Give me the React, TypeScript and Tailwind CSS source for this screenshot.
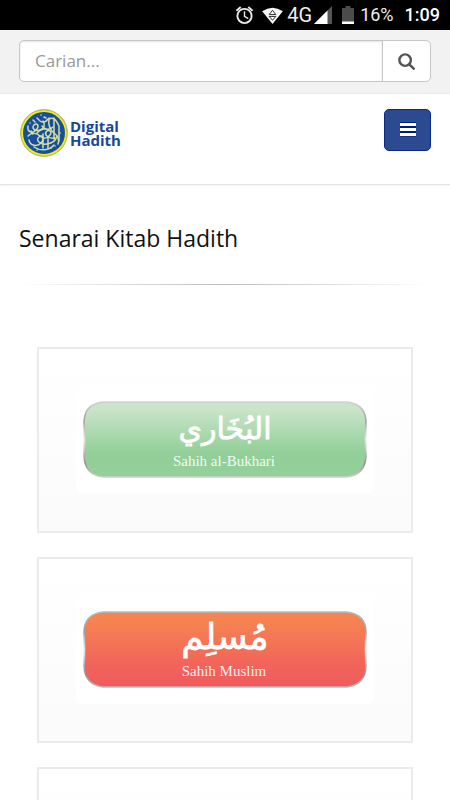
import { useId } from "react";

type Book = {
  arabic: string;
  arabicSize: number;
  title: string;
  from: string;
  middle: string;
  to: string;
  edge: string;
};

const books: Book[] = [
  {
    arabic: "البُخَاري",
    arabicSize: 30,
    title: "Sahih al-Bukhari",
    from: "#c9e4c9",
    middle: "#92cf98",
    to: "#94d09a",
    edge: "#d6cfd0",
  },
  {
    arabic: "مُسلِم",
    arabicSize: 36,
    title: "Sahih Muslim",
    from: "#f58452",
    middle: "#f2655a",
    to: "#f05a5f",
    edge: "#b9bcbb",
  },
];

function StatusBar() {
  return (
    <div className="flex h-[30px] shrink-0 items-center justify-end bg-black pr-[10px] font-['Roboto',sans-serif] text-lg leading-none text-[#eeeeee]">
      <svg aria-label="Alarm" className="mr-2 h-5 w-[19px]" fill="none" role="img" stroke="#e8e8e8" strokeWidth="2" viewBox="0 0 20 20">
        <circle cx="10" cy="11" r="7.5" />
        <path d="M10 6v5.5l4 2.3" strokeWidth="1.5" />
        <path d="M1.5 5.5 6 1.5M18.5 5.5 14 1.5" />
      </svg>
      <svg aria-label="Wi-Fi" className="mr-1 h-[17px] w-[21px]" role="img" viewBox="0 0 22 18">
        <path d="M0 4.5Q11-3 22 4.5L11 18Z" fill="#f5f5f5" />
        <path d="m11 3.5-3.5 4.5h7ZM7.5 10h7L11 14Z" fill="#fff" stroke="#222" strokeWidth="1" />
      </svg>
      <span className="text-xl leading-none">4G</span>
      <svg aria-label="Signal" className="ml-[2px] mr-[10px] h-[18px] w-[18px]" role="img" viewBox="0 0 18 18">
        <path d="M0 18 18 0v18Z" fill="#555" />
        <path d="M0 18 13.5 4.5V18Z" fill="#fff" />
      </svg>
      <svg aria-label="Battery" className="mr-[6px] h-[18px] w-3" role="img" viewBox="0 0 12 18">
        <path d="M3.5 0h5v2H12v16H0V2h3.5Z" fill="#4b4b4b" />
        <path d="M0 15.5h12V18H0Z" fill="#fff" />
      </svg>
      <span className="mr-[11px]">16%</span>
      <span className="font-medium text-white">1:09</span>
    </div>
  );
}

function SearchBar() {
  return (
    <div className="border-b border-[#ebebeb] bg-[#f2f2f2] px-[19px] pb-[11px] pt-[10px]">
      <form className="flex h-[42px] overflow-hidden rounded-[5px] border border-[#c6c6c6] bg-white" role="search">
        <input
          aria-label="Carian"
          className="min-w-0 flex-1 px-[15px] text-[17px] text-[#555] shadow-[inset_0_1px_2px_rgba(0,0,0,0.12)] outline-none placeholder:text-[#999]"
          placeholder="Carian..."
          type="text"
        />
        <button aria-label="Cari" className="flex w-12 items-center justify-center border-l border-[#c6c6c6]" type="submit">
          <svg className="h-[17px] w-[17px]" fill="none" stroke="#555" viewBox="0 0 16 16">
            <circle cx="6.7" cy="6.7" r="5.4" strokeWidth="2.3" />
            <path d="m10.6 10.6 4.2 4.2" strokeLinecap="round" strokeWidth="2.3" />
          </svg>
        </button>
      </form>
    </div>
  );
}

function Logo() {
  return (
    <a aria-label="Digital Hadith" className="flex items-center gap-[2px] pl-px" href="#">
      <svg className="h-12 w-12" fill="none" viewBox="0 0 48 48">
        <circle cx="24" cy="24" fill="#174f9e" r="23.4" stroke="#b9bc79" strokeWidth="1" />
        <circle cx="24" cy="24" r="22" stroke="#f2ec15" strokeWidth="2" />
        <g stroke="#d5dfa0" strokeLinecap="round" strokeWidth="1.5">
          <path d="M8 17c-1 6 4 8 8 4s1-8-2-5 1 7 6 5 5-6 3-9" />
          <path d="M29 9c-1 7 1 12 5 15s6 6 4 11" />
          <path d="M34 9v21M39 17v15M29 10c4-2 7 0 10 7" />
          <path d="M20 12c3 2 6 1 8-2M13 11l2 2M17 9l2 2M24 8l2 1" />
          <path d="M8 27c4-4 9-3 12 0s7 3 10-1-2-6-4-3 3 7 9 6" />
          <path d="M9 31c1 6 8 7 12 3s2-9-2-6 1 8 8 7 9-4 10-8" />
          <path d="M14 38c6 4 15 4 20-2M23 25v14M28 29v10M11 22l2 3" />
          <path d="M17 24c3-4 8-5 12-3M22 17c3 4 8 4 11 1" />
          <path d="M31 39h.1M35 37h.1M17 41h.1M10 14h.1M40 24h.1M21 6h.1" />
        </g>
      </svg>
      <span className="text-[15px] font-bold leading-[14px] text-[#19479b]">
        Digital
        <br />
        Hadith
      </span>
    </a>
  );
}

function BookBadge({ book }: { book: Book }) {
  const id = useId();
  const shape = "M20 1H264Q283 3 283 22Q282 38 283 55Q282 74 264 76H20Q2 74 1 55Q2 38 1 22Q1 3 20 1Z";

  return (
    <svg aria-label={book.title} className="block w-full" role="img" viewBox="0 0 284 77">
      <defs>
        <linearGradient id={`${id}-fill`} x1="0" x2="0" y1="0" y2="1">
          <stop offset="0.1" stopColor={book.from} />
          <stop offset="0.68" stopColor={book.middle} />
          <stop offset="1" stopColor={book.to} />
        </linearGradient>
        <linearGradient id={`${id}-edge`} x1="0" x2="0" y1="0" y2="1">
          <stop offset="0" stopColor={book.edge} />
          <stop offset="0.25" stopColor="#a39fa0" />
          <stop offset="0.5" stopColor="#e6e6e6" />
          <stop offset="0.82" stopColor="#969193" />
          <stop offset="1" stopColor={book.edge} />
        </linearGradient>
      </defs>
      <path d={shape} fill={`url(#${id}-fill)`} stroke={`url(#${id}-edge)`} strokeWidth="1.6" />
      <g fill="#fff" textAnchor="middle">
        <text
          fontFamily="'DejaVu Sans', sans-serif"
          fontSize={book.arabicSize}
          stroke="#fff"
          strokeWidth="0.8"
          x="142"
          y="38"
        >
          {book.arabic}
        </text>
        <text fillOpacity="0.9" fontFamily="'Liberation Serif', serif" fontSize="15" x="141" y="65">
          {book.title}
        </text>
      </g>
    </svg>
  );
}

function BookCard({ book }: { book?: Book }) {
  return (
    <li className="h-[186px] shrink-0 border-2 border-[#ebebeb] bg-linear-to-b from-white to-[#fbfbfb] px-[37px] py-[36px]">
      {book && (
        <a className="block rounded-md bg-white px-[7px] py-4" href="#">
          <BookBadge book={book} />
        </a>
      )}
    </li>
  );
}

export default function App() {
  return (
    <div className="flex h-screen flex-col overflow-hidden bg-white font-['Open_Sans',sans-serif]">
      <StatusBar />
      <SearchBar />
      <header className="flex h-[91px] shrink-0 items-start justify-between border-b border-[#e3e3e3] px-[19px] pt-[15px] shadow-[0_1px_2px_rgba(0,0,0,0.05)]">
        <Logo />
        <button
          aria-label="Menu"
          className="flex h-[42px] w-[47px] items-center justify-center rounded-[5px] border border-[#08298a] bg-[#2c4a8f]"
          type="button"
        >
          <svg className="h-4 w-4" viewBox="0 0 16 16">
            <path d="M0 2h16M0 7h16M0 12h16" stroke="#001a80" strokeWidth="5" />
            <path d="M0 2.5h16M0 7.5h16M0 12.5h16" stroke="#fff" strokeWidth="3" />
          </svg>
        </button>
      </header>
      <main className="px-[19px] pt-[37px]">
        <h1 className="text-[23px] leading-8 text-[#111]">Senarai Kitab Hadith</h1>
        <hr className="mt-[30px] h-px border-0 bg-linear-to-r from-transparent via-[#bbb] to-transparent" />
        <ul className="mt-[62px] flex flex-col gap-6 px-[18px]">
          {books.map((book) => (
            <BookCard book={book} key={book.title} />
          ))}
          <BookCard />
        </ul>
      </main>
    </div>
  );
}
